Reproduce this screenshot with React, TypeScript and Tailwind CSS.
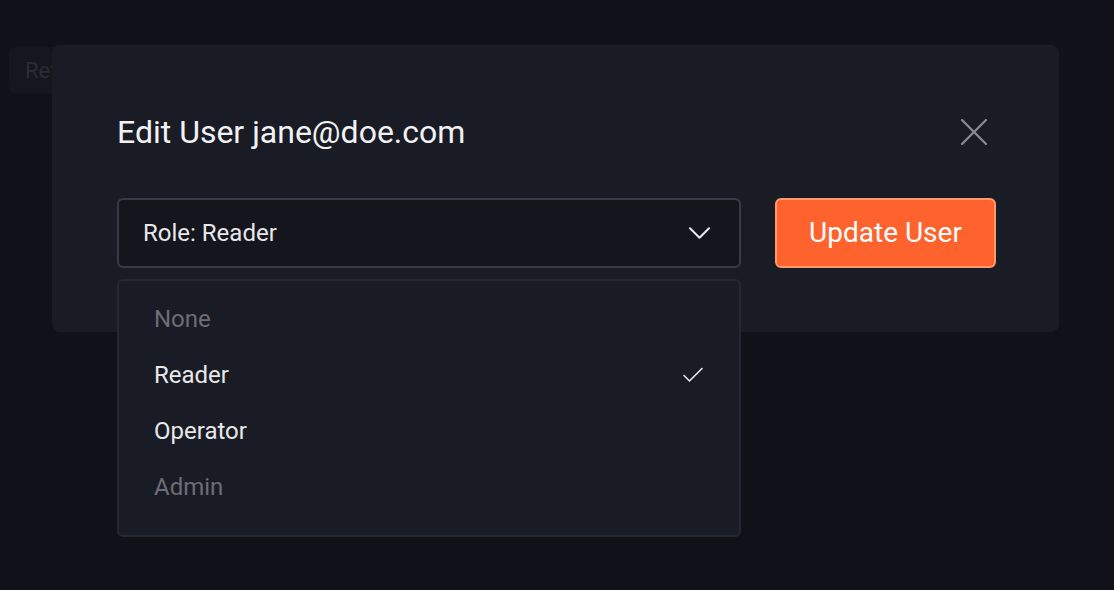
import { useState } from "react";

const roles = [
  { name: "None", disabled: true },
  { name: "Reader", disabled: false },
  { name: "Operator", disabled: false },
  { name: "Admin", disabled: true },
];

function CloseIcon() {
  return (
    <svg width="26" height="26" viewBox="0 0 26 26" fill="none">
      <path d="M1 1L25 25M25 1L1 25" stroke="#8b8c94" strokeWidth="2.2" strokeLinecap="round" />
    </svg>
  );
}

function Chevron() {
  return (
    <svg width="21" height="12" viewBox="0 0 21 12" fill="none">
      <path d="M1 1.2L10.5 10.8L20 1.2" stroke="#e8e8ea" strokeWidth="2" strokeLinecap="round" strokeLinejoin="round" />
    </svg>
  );
}

function Check() {
  return (
    <svg width="20" height="16" viewBox="0 0 20 16" fill="none">
      <path d="M1 8.5L6.5 14L19 1.5" stroke="#e8e8ea" strokeWidth="1.6" strokeLinecap="round" strokeLinejoin="round" />
    </svg>
  );
}

export default function App() {
  const [role, setRole] = useState("Reader");

  return (
    <div
      className="relative min-h-screen bg-[#111219] pl-[9px] pt-[47px]"
      style={{ fontFamily: "Roboto, 'Noto Sans', sans-serif" }}
    >
      {/* page content behind the modal */}
      <button className="h-[46px] rounded-md bg-[#15161e] px-4 text-[22px] text-[#2b2c35]">
        Refresh
      </button>

      {/* modal */}
      <div className="absolute left-[52px] top-[45px] w-[1007px] rounded-lg bg-[#1a1c25] pb-[64px] pl-[65px] pr-[63px] pt-[67px]">
        <div className="flex items-center justify-between">
          <h2 className="text-[32px] leading-[40px] text-[#f2f2f4]">Edit User jane@doe.com</h2>
          <button className="mr-[9px] flex h-[26px] w-[26px] items-center justify-center">
            <CloseIcon />
          </button>
        </div>

        <div className="mt-[46px] flex items-center gap-[34px]">
          <div className="relative w-[624px] shrink-0">
            <button className="flex h-[70px] w-full items-center justify-between rounded-md border-2 border-[#393a43] bg-[#14151d] pl-[24px] pr-[29px] text-[24px] text-[#e8e8ea]">
              <span>Role: {role}</span>
              <Chevron />
            </button>

            <ul className="absolute left-0 top-full z-10 mt-[11px] w-full rounded-md border-2 border-[#252732] bg-[#1a1c25] pb-[20px] pt-[10px]">
              {roles.map((r) => (
                <li
                  key={r.name}
                  onClick={() => !r.disabled && setRole(r.name)}
                  className={
                    r.disabled
                      ? "flex h-[56px] items-center justify-between pl-[35px] pr-[36px] text-[24px] text-[#6c6d76]"
                      : "flex h-[56px] cursor-pointer items-center justify-between pl-[35px] pr-[36px] text-[24px] text-[#e8e8ea]"
                  }
                >
                  <span>{r.name}</span>
                  {role === r.name && <Check />}
                </li>
              ))}
            </ul>
          </div>

          <button className="h-[70px] w-[221px] shrink-0 rounded-md border-2 border-[#ff9a70] bg-[#ff632d] text-[28px] text-white">
            Update User
          </button>
        </div>
      </div>
    </div>
  );
}
